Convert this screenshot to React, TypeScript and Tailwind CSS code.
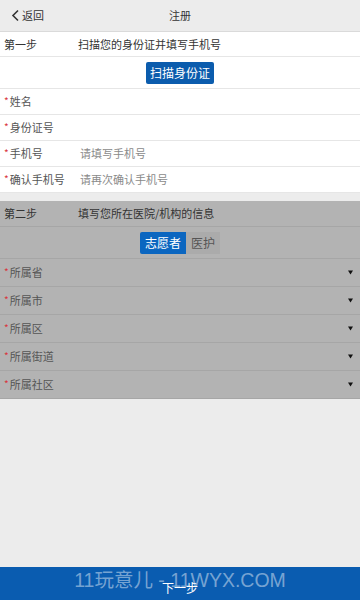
import React from 'react'

const font = { fontFamily: '"Noto Sans CJK SC", "Noto Sans", sans-serif' }

function Star() {
  return <span className="text-[#d9363e] text-[10px] mr-[1px] relative top-[-1px]">*</span>
}

function InputRow({ label, placeholder }: { label: string; placeholder?: string }) {
  return (
    <div className="flex items-center h-[26px] border-b border-[#e6e6e6] bg-white px-[4px] text-[11px]">
      <div className="w-[76px] flex items-center text-[#555]">
        <Star />
        {label}
      </div>
      {placeholder && <div className="text-[#8a8a8a]">{placeholder}</div>}
    </div>
  )
}

function SelectRow({ label }: { label: string }) {
  return (
    <div className="flex items-center justify-between h-[28px] border-b border-[#a6a6a6] px-[4px] text-[11px]">
      <div className="flex items-center text-[#555]">
        <Star />
        {label}
      </div>
      <svg width="5" height="5" viewBox="0 0 5 5" className="mr-[3px]">
        <path d="M0 0.5 L5 0.5 L2.5 4.5 Z" fill="#111" />
      </svg>
    </div>
  )
}

export default function App() {
  return (
    <div className="w-[360px] h-[600px] bg-[#ececec] flex flex-col overflow-hidden relative" style={font}>
      {/* header */}
      <div className="h-[32px] bg-[#ececec] border-b border-[#dadada] flex items-center relative shrink-0">
        <div className="flex items-center pl-[11px] text-[11px] text-[#333]">
          <svg width="9" height="13" viewBox="0 0 9 13" className="mr-[2px]">
            <path d="M7 1.5 L2 6.5 L7 11.5" fill="none" stroke="#333" strokeWidth="1.6" />
          </svg>
          返回
        </div>
        <div className="absolute left-0 right-0 text-center text-[11px] text-[#333] pointer-events-none">注册</div>
      </div>

      {/* step 1 */}
      <div className="bg-white">
        <div className="flex items-center h-[25px] border-b border-[#e6e6e6] px-[4px] text-[11px] text-[#333]">
          <div className="w-[74px]">第一步</div>
          <div>扫描您的身份证并填写手机号</div>
        </div>
        <div className="flex justify-center items-center h-[32px] border-b border-[#e6e6e6]">
          <button className="h-[22px] px-[4px] rounded-[2px] bg-[#0b5cad] text-white text-[12px]">扫描身份证</button>
        </div>
        <InputRow label="姓名" />
        <InputRow label="身份证号" />
        <InputRow label="手机号" placeholder="请填写手机号" />
        <InputRow label="确认手机号" placeholder="请再次确认手机号" />
      </div>

      <div className="h-[8px] shrink-0" />

      {/* step 2 */}
      <div className="bg-[#b3b3b3]">
        <div className="flex items-center h-[26px] border-b border-[#a6a6a6] px-[4px] text-[11px] text-[#333]">
          <div className="w-[74px]">第二步</div>
          <div>填写您所在医院/机构的信息</div>
        </div>
        <div className="flex justify-center items-center h-[32px] border-b border-[#a6a6a6]">
          <div className="flex h-[22px] text-[12px]">
            <div className="bg-[#0b66c0] text-white px-[5px] flex items-center rounded-l-[2px]">志愿者</div>
            <div className="bg-[#ababab] text-[#555] px-[5px] flex items-center">医护</div>
          </div>
        </div>
        <SelectRow label="所属省" />
        <SelectRow label="所属市" />
        <SelectRow label="所属区" />
        <SelectRow label="所属街道" />
        <SelectRow label="所属社区" />
      </div>

      <div className="flex-1" />

      {/* footer */}
      <div className="h-[33px] bg-[#0a5cb0] shrink-0 flex items-center justify-center relative">
        <span className="text-white text-[12px] relative top-[4px]">下一步</span>
        <div className="absolute left-0 right-0 top-[-1px] text-center text-[19.5px] text-white/45 pointer-events-none" style={{ fontFamily: '"Liberation Sans", "Noto Sans CJK SC", sans-serif' }}>
          11玩意儿 - 11WYX.COM
        </div>
      </div>
    </div>
  )
}
